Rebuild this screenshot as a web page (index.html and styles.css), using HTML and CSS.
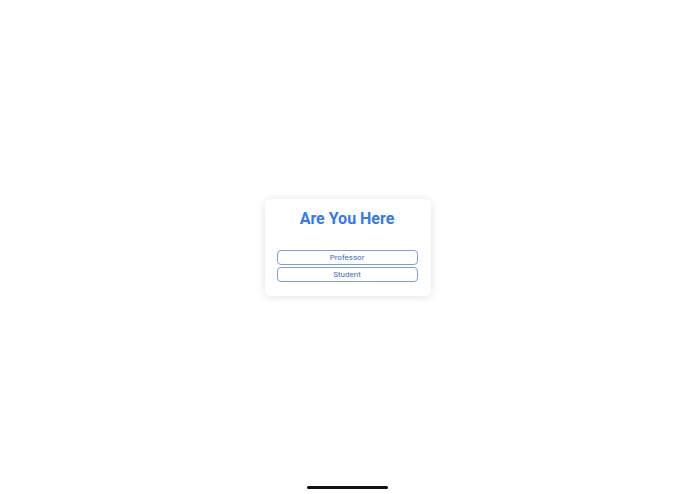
FILE: index.html
```html
<!DOCTYPE html>
<html lang="en">
<head>
    <meta charset="UTF-8">
    <meta name="viewport" content="width=device-width, initial-scale=1.0">
    <title>Are You Here</title>
    <link rel="stylesheet" href="styles.css">
</head>
<body>
    <div class="screen">
        <div class="card">
            <h1 class="title">Are You Here</h1>
            <div class="role-list">
                <button class="role-button">Professor</button>
                <button class="role-button">Student</button>
            </div>
        </div>
    </div>
    <div class="home-indicator"></div>
</body>
</html>
```

FILE: styles.css
```css
* {
    margin: 0;
    padding: 0;
    box-sizing: border-box;
}

body {
    font-family: Roboto, 'Liberation Sans', Arial, sans-serif;
    background: #fff;
    width: 695px;
    height: 494px;
    overflow: hidden;
    position: relative;
}

.screen {
    height: 100%;
    display: flex;
    align-items: center;
    justify-content: center;
}

.card {
    width: 166px;
    height: 97px;
    background: #fff;
    border-radius: 5px;
    box-shadow: 0 1px 8px rgba(0,0,0,0.12);
    padding: 9px 13px 0 12px;
}

.title {
    color: #3478f6;
    font-size: 16px;
    font-weight: 700;
    text-align: center;
    line-height: 22px;
}

.role-list {
    margin-top: 20px;
    display: flex;
    flex-direction: column;
    gap: 2px;
}

.role-button {
    height: 15px;
    background: #fff;
    border: 1px solid #7d9fd6;
    border-radius: 4px;
    color: #3d6cc0;
    font-family: Roboto, 'Liberation Sans', Arial, sans-serif;
    font-size: 8px;
    font-weight: 400;
    line-height: 13px;
}

.home-indicator {
    position: absolute;
    left: 307px;
    top: 486px;
    width: 81px;
    height: 3px;
    background: #111;
    border-radius: 2px;
}
```
